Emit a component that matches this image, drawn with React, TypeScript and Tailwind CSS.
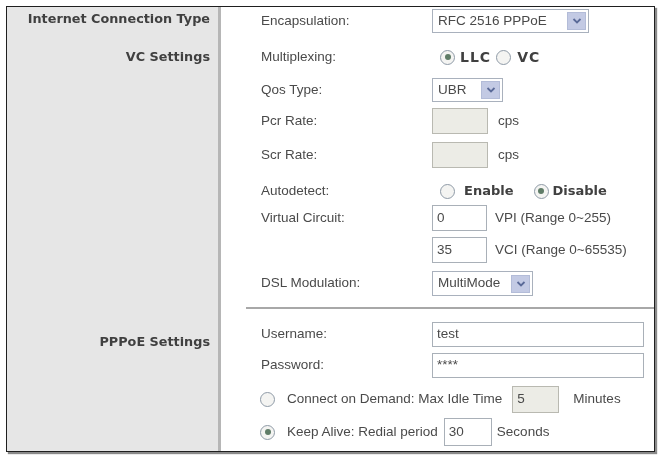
import type { ReactNode } from 'react';

const sans = "font-['Liberation_Sans',Arial,sans-serif]";
const bold = "font-['DejaVu_Sans',Verdana,sans-serif] font-bold";

function Chevron() {
  return (
    <svg width="10" height="8" viewBox="0 0 10 8" fill="none">
      <path d="M1.5 2 L5 5.5 L8.5 2" stroke="#5a6a98" strokeWidth="1.8" />
    </svg>
  );
}

function Select({ value, className }: { value: string; className: string }) {
  return (
    <div className={`flex h-[24px] items-center justify-between border border-[#a9b1bd] bg-white pl-[5px] pr-[2px] ${className}`}>
      <span className="text-[13.5px] text-[#4a4a4a]">{value}</span>
      <span className="flex h-[18px] w-[19px] items-center justify-center border border-[#b3bcd8] bg-[#c3cae4]">
        <Chevron />
      </span>
    </div>
  );
}

function Radio({ checked = false }: { checked?: boolean }) {
  return (
    <span className="flex h-[15px] w-[15px] shrink-0 items-center justify-center rounded-full border border-[#8f9ba7] bg-[#f4f4f2]">
      {checked && <span className="h-[6px] w-[6px] rounded-full bg-[#5f7c67]" />}
    </span>
  );
}

function Field({ value = '', disabled = false, className }: { value?: string; disabled?: boolean; className: string }) {
  return (
    <div
      className={`flex items-center border px-[4px] text-[13.5px] text-[#4a4a4a] ${
        disabled ? 'border-[#b9b9b1] bg-[#ecece6]' : 'border-[#a9b0b8] bg-white'
      } ${className}`}
    >
      {value}
    </div>
  );
}

function Row({ label, className, children }: { label?: string; className: string; children: ReactNode }) {
  return (
    <div className={`flex items-center pl-[40px] ${className}`}>
      <span className="w-[171px] shrink-0 text-[13.5px] text-[#4a4a4a]">{label}</span>
      {children}
    </div>
  );
}

export default function App() {
  return (
    <div className={`h-[456px] w-[659px] bg-white pl-[6px] pt-[6px] ${sans}`}>
      <div className="flex h-[446px] w-[649px] border-[1.5px] border-[#1f1f1f] shadow-[2px_2px_1px_#8a8a8a] blur-[0.3px]">
        <div className={`flex w-[211px] shrink-0 flex-col items-end bg-[#e6e6e6] pr-[8px] text-[12.8px] leading-[16px] text-[#404040] ${bold}`}>
          <span className="mt-[4px]">Internet Connection Type</span>
          <span className="mt-[22px]">VC Settings</span>
          <span className="mt-[269px]">PPPoE Settings</span>
        </div>

        <div className="flex-1 border-l-[3px] border-[#b6b6b6] bg-white">
          <Row label="Encapsulation:" className="mt-[2px] h-[24px]">
            <Select value="RFC 2516 PPPoE" className="w-[157px]" />
          </Row>

          <Row label="Multiplexing:" className="mt-[12px] h-[24px]">
            <span className="ml-[8px]">
              <Radio checked />
            </span>
            <span className={`ml-[5px] text-[14px] tracking-[1px] text-[#404040] ${bold}`}>LLC</span>
            <span className="ml-[5px]">
              <Radio />
            </span>
            <span className={`ml-[6px] text-[14px] tracking-[1px] text-[#404040] ${bold}`}>VC</span>
          </Row>

          <Row label="Qos Type:" className="mt-[9px] h-[24px]">
            <Select value="UBR" className="w-[71px]" />
          </Row>

          <Row label="Pcr Rate:" className="mt-[6px] h-[26px]">
            <Field disabled className="h-[26px] w-[56px]" />
            <span className="ml-[10px] text-[13.5px] text-[#4a4a4a]">cps</span>
          </Row>

          <Row label="Scr Rate:" className="mt-[8px] h-[26px]">
            <Field disabled className="h-[26px] w-[56px]" />
            <span className="ml-[10px] text-[13.5px] text-[#4a4a4a]">cps</span>
          </Row>

          <Row label="Autodetect:" className="mt-[11px] h-[24px]">
            <span className="ml-[8px]">
              <Radio />
            </span>
            <span className={`ml-[9px] text-[13px] text-[#404040] ${bold}`}>Enable</span>
            <span className="ml-[20px]">
              <Radio checked />
            </span>
            <span className={`ml-[4px] text-[13px] text-[#404040] ${bold}`}>Disable</span>
          </Row>

          <Row label="Virtual Circuit:" className="mt-[2px] h-[26px]">
            <Field value="0" className="h-[26px] w-[55px]" />
            <span className="ml-[8px] text-[13.5px] text-[#4a4a4a]">VPI (Range 0~255)</span>
          </Row>

          <Row className="mt-[6px] h-[26px]">
            <Field value="35" className="h-[26px] w-[55px]" />
            <span className="ml-[8px] text-[13.5px] text-[#4a4a4a]">VCI (Range 0~65535)</span>
          </Row>

          <Row label="DSL Modulation:" className="mt-[8px] h-[25px]">
            <Select value="MultiMode" className="h-[25px] w-[101px]" />
          </Row>

          <div className="ml-[25px] mt-[11px] h-[2px] bg-[#a8a8a8]" />

          <Row label="Username:" className="mt-[13px] h-[25px]">
            <Field value="test" className="h-[25px] w-[212px]" />
          </Row>

          <Row label="Password:" className="mt-[6px] h-[25px]">
            <Field value="****" className="h-[25px] w-[212px] text-[11px]" />
          </Row>

          <div className="mt-[8px] flex h-[27px] items-center pl-[39px] text-[13.5px] text-[#4a4a4a]">
            <Radio />
            <span className="ml-[12px]">Connect on Demand: Max Idle Time</span>
            <Field value="5" disabled className="ml-[10px] h-[27px] w-[47px]" />
            <span className="ml-[14px]">Minutes</span>
          </div>

          <div className="mt-[5px] flex h-[28px] items-center pl-[39px] text-[13.5px] text-[#4a4a4a]">
            <Radio checked />
            <span className="ml-[12px]">Keep Alive: Redial period</span>
            <Field value="30" className="ml-[6px] h-[28px] w-[48px]" />
            <span className="ml-[5px]">Seconds</span>
          </div>
        </div>
      </div>
    </div>
  );
}
